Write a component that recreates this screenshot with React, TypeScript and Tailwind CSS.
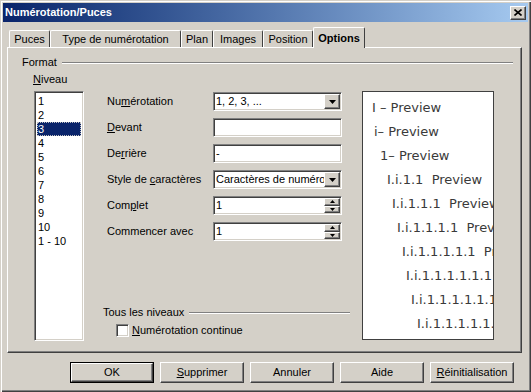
import React from 'react';

const sunken =
  'border border-t-[#808080] border-l-[#808080] border-b-white border-r-white shadow-[inset_1px_1px_0_#404040,inset_-1px_-1px_0_#d4d0c8]';
const raised =
  'border border-t-white border-l-white border-b-[#404040] border-r-[#404040] shadow-[inset_-1px_-1px_0_#808080]';

const U = ({ children }: { children: React.ReactNode }) => <span className="underline underline-offset-1">{children}</span>;

const tabs = [
  { label: 'Puces', w: 41 },
  { label: 'Type de numérotation', w: 131 },
  { label: 'Plan', w: 32 },
  { label: 'Images', w: 50 },
  { label: 'Position', w: 50 },
];

const levels = ['1', '2', '3', '4', '5', '6', '7', '8', '9', '10', '1 - 10'];

const preview = [
  { t: 'I – Preview', x: 10 },
  { t: 'i– Preview', x: 12 },
  { t: '1– Preview', x: 18 },
  { t: 'I.i.1.1  Preview', x: 25 },
  { t: 'I.i.1.1.1  Preview', x: 30 },
  { t: 'I.i.1.1.1.1  Preview', x: 35 },
  { t: 'I.i.1.1.1.1.1  Preview', x: 40 },
  { t: 'I.i.1.1.1.1.1.1  Preview', x: 44 },
  { t: 'I.i.1.1.1.1.1.1.1  Preview', x: 49 },
  { t: 'I.i.1.1.1.1.1.1.1.1  Preview', x: 55 },
];

const DropArrow = () => (
  <div className={`${raised} bg-[#d4d0c8] w-[16px] h-full flex items-center justify-center`}>
    <svg width="7" height="4" viewBox="0 0 7 4">
      <path d="M0 0h7L3.5 4z" fill="#000" />
    </svg>
  </div>
);

const Spin = () => (
  <div className="flex flex-col w-[16px] h-full">
    <div className={`${raised} bg-[#d4d0c8] flex-1 flex items-center justify-center`}>
      <svg width="5" height="3" viewBox="0 0 5 3">
        <path d="M2.5 0L5 3H0z" fill="#000" />
      </svg>
    </div>
    <div className={`${raised} bg-[#d4d0c8] flex-1 flex items-center justify-center`}>
      <svg width="5" height="3" viewBox="0 0 5 3">
        <path d="M0 0h5L2.5 3z" fill="#000" />
      </svg>
    </div>
  </div>
);

const Field = ({ value, kind }: { value?: string; kind?: 'drop' | 'spin' }) => (
  <div className={`${sunken} bg-white w-[129px] h-[19px] flex items-stretch p-[1px]`}>
    <div className="flex-1 overflow-hidden whitespace-nowrap pl-[1px] leading-[15px]">{value}</div>
    {kind === 'drop' && <DropArrow />}
    {kind === 'spin' && <Spin />}
  </div>
);

const rows: { label: React.ReactNode; value?: string; kind?: 'drop' | 'spin' }[] = [
  { label: <>Nu<U>m</U>érotation</>, value: '1, 2, 3, ...', kind: 'drop' },
  { label: <><U>D</U>evant</> },
  { label: <>De<U>r</U>rière</>, value: '-' },
  { label: <>Style de <U>c</U>aractères</>, value: 'Caractères de numérotation', kind: 'drop' },
  { label: <>Com<U>p</U>let</>, value: '1', kind: 'spin' },
  { label: <>Commencer avec</>, value: '1', kind: 'spin' },
];

const buttons: React.ReactNode[] = [
  'OK',
  <><U>S</U>upprimer</>,
  'Annuler',
  'Aide',
  <><U>R</U>éinitialisation</>,
];

export default function App() {
  return (
    <div className="w-[531px] h-[392px] bg-[#d4d0c8] p-[3px] flex flex-col text-[11px] text-black font-['Liberation_Sans',Arial,sans-serif] shadow-[inset_1px_1px_0_#d4d0c8,inset_2px_2px_0_#fff,inset_-1px_-1px_0_#404040,inset_-2px_-2px_0_#808080]">
      {/* title bar */}
      <div className="h-[19px] bg-gradient-to-r from-[#0a246a] to-[#a6caf0] flex items-center justify-between pl-[2px] pr-[2px]">
        <span className="text-white font-bold text-[11px]">Numérotation/Puces</span>
        <div className={`${raised} bg-[#d4d0c8] w-[16px] h-[14px] flex items-center justify-center`}>
          <svg width="8" height="7" viewBox="0 0 8 7">
            <path d="M0.5 0.5L7.5 6.5M7.5 0.5L0.5 6.5" stroke="#000" strokeWidth="1.6" />
          </svg>
        </div>
      </div>

      {/* tabs */}
      <div className="h-[25px] flex items-end pl-[6px]">
        {tabs.map((t) => (
          <div
            key={t.label}
            style={{ width: t.w }}
            className="h-[17px] border-t border-l border-t-white border-l-white border-r border-r-[#404040] rounded-t-[2px] flex items-center justify-center"
          >
            {t.label}
          </div>
        ))}
        <div className="w-[52px] h-[21px] -mb-px z-10 bg-[#d4d0c8] border-t border-l border-t-white border-l-white border-r border-r-[#404040] rounded-t-[2px] flex items-center justify-center font-bold">
          Options
        </div>
      </div>

      {/* tab page */}
      <div className="mx-[4px] w-[515px] h-[306px] border border-t-white border-l-white border-b-[#404040] border-r-[#404040] shadow-[inset_-1px_-1px_0_#808080]">
        <div className="flex items-center pl-[14px] pt-[8px] pr-[8px]">
          <span className="leading-[13px]">Format</span>
          <div className="flex-1 ml-[5px] h-[2px] border-t border-t-[#808080] border-b border-b-white" />
        </div>

        <div className="flex mt-[4px] pl-[26px]">
          <div className="w-[50px]">
            <div className="-ml-px h-[13px] leading-[13px]">
              <U>N</U>iveau
            </div>
            <div className={`${sunken} bg-white mt-[5px] h-[250px] p-[2px]`}>
              {levels.map((l) => (
                <div
                  key={l}
                  className={`h-[14px] leading-[14px] pl-[1px] ${
                    l === '3' ? 'bg-[#0a246a] text-white outline-1 outline-dotted outline-[#c0c0c0] -outline-offset-1' : ''
                  }`}
                >
                  {l}
                </div>
              ))}
            </div>
          </div>

          <div className="ml-[19px] w-[247px] mt-[19px] flex flex-col">
            <div className="flex flex-col gap-[7px]">
              {rows.map((r, i) => (
                <div key={i} className="flex items-center h-[19px]">
                  <div className="w-[110px] pl-[4px]">{r.label}</div>
                  <Field value={r.value} kind={r.kind} />
                </div>
              ))}
            </div>
            <div className="flex items-center mt-[65px]">
              <span className="leading-[13px]">Tous les niveaux</span>
              <div className="flex-1 ml-[5px] h-[2px] border-t border-t-[#808080] border-b border-b-white" />
            </div>
            <div className="flex items-center mt-[3px] pl-[13px]">
              <div className={`${sunken} bg-white w-[13px] h-[13px]`} />
              <span className="ml-[3px]">
                <U>N</U>umérotation continue
              </span>
            </div>
          </div>

          <div className="ml-[12px] mt-[18px] w-[132px] h-[249px] bg-white border border-[#404040] overflow-hidden pt-[4px] font-['DejaVu_Sans',sans-serif] text-[13px] text-[#3a3a3a]">
            {preview.map((p) => (
              <div key={p.t} style={{ paddingLeft: p.x - 1 }} className="h-[24px] leading-[24px] whitespace-pre">
                {p.t}
              </div>
            ))}
          </div>
        </div>
      </div>

      {/* buttons */}
      <div className="flex gap-[6px] pl-[67px] mt-[9px]">
        {buttons.map((b, i) => (
          <div
            key={i}
            className={`w-[84px] h-[21px] bg-[#d4d0c8] flex items-center justify-center ${
              i === 0 ? 'border border-black' : ''
            }`}
          >
            <div className={`${raised} w-full h-full flex items-center justify-center`}>{b}</div>
          </div>
        ))}
      </div>
    </div>
  );
}
